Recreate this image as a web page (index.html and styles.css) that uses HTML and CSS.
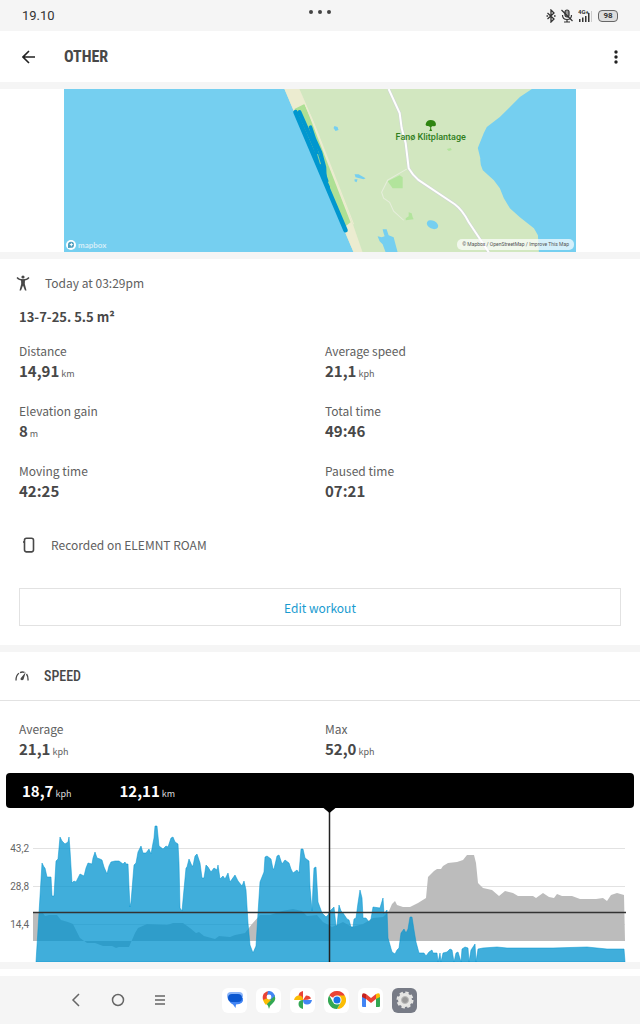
FILE: index.html
```html
<!DOCTYPE html>
<html lang="en">
<head>
    <meta charset="UTF-8">
    <meta name="viewport" content="width=device-width, initial-scale=1.0">
    <title>Workout</title>
    <link rel="stylesheet" href="styles.css">
</head>
<body>
    <!-- Status bar -->
    <div class="status-bar">
        <span class="clock">19.10</span>
        <svg class="dots" width="24" height="6" viewBox="0 0 24 6" fill="#444"><circle cx="3" cy="3" r="2"/><circle cx="12" cy="3" r="2"/><circle cx="21" cy="3" r="2"/></svg>
        <div class="status-icons">
            <svg width="10" height="14" viewBox="0 0 10 14" fill="none" stroke="#333" stroke-width="1.3"><path d="M1.500 4l6.500 6-3 3V1l3 3-6.500 6"/><path d="M0.500 7h1.600M8 7h1.600"/></svg>
            <svg width="12" height="14" viewBox="0 0 12 14" fill="none" stroke="#333" stroke-width="1.2"><rect x="4" y="1" width="4" height="7" rx="2" fill="#999"/><path d="M1.500 6c0 6 9 6 9 0M6 10.500V13M3 13h6M0.500 1l11 11"/></svg>
            <svg width="15" height="14" viewBox="0 0 15 14"><g fill="#333"><rect x="1" y="10" width="1.500" height="3"/><rect x="4" y="8.500" width="1.500" height="4.500"/><rect x="7" y="7" width="1.500" height="6"/><rect x="10" y="4" width="1.500" height="9"/></g><rect x="13" y="2" width="1" height="11" fill="#ccc"/><text class="network" x="0" y="5">4G+</text></svg>
            <span class="battery">98</span>
        </div>
    </div>

    <header class="app-header">
        <button class="icon-button" aria-label="Back">
            <svg width="14" height="14" viewBox="0 0 14 14" fill="none" stroke="#222" stroke-width="1.600"><path d="M13 7H1.500M7 1L1 7l6 6"/></svg>
        </button>
        <h1>OTHER</h1>
        <button class="icon-button" aria-label="More options">
            <svg width="4" height="14" viewBox="0 0 4 14" fill="#222"><circle cx="2" cy="2" r="1.700"/><circle cx="2" cy="7" r="1.700"/><circle cx="2" cy="12" r="1.700"/></svg>
        </button>
    </header>

    <!-- Route map -->
    <section class="map-section">
        <div class="map">
            <svg class="map-image" viewBox="0 0 511 163">
                <rect width="511" height="163" fill="#75cff0"/>
                <path fill="#d2e7c0" d="M220 0L289 163H474L473 146 469 139 455 128 445 119 439 109 435 99 429 91 418 81Q415 76 415.500 69L413 59 419 44 422 38 435 28 455 8 467 0Z"/>
                <path fill="#ececd0" d="M220 0H235L248 30 288 134 298 163H289Z"/>
                <path fill="#aee094" d="M230 20L240 15 246 30 286 133 281 137Z"/>
                <path fill="none" stroke="#ececd0" d="M240 14L250 36 289 135"/>
                <g fill="#b2e49c"><path d="M323 92L335 86 338 88V99H328Z"/><path d="M341 129l3-2v-4l3 1 1 4 1 2-8 1Z"/><path d="M382 60l4-1 1 2-3 1Z"/></g>
                <g fill="#75cff0"><path d="M270 37l3 1 1 3-3 1-2-3Z"/><path d="M290 85l4 0 7 4-2 1-8-2Z"/><path d="M290 90l3 0-1 3-2-1Z"/><ellipse cx="368" cy="135.500" rx="6" ry="4" transform="rotate(25 368 135)"/><path d="M313 147l4 1 3-1-1-3-1-4 4 0 2 6 5 2 4 15H321L318 155 315 152Z"/></g>
                <path fill="none" stroke="#e6eedb" d="M342 80L323 91 317 103 319 109 325 113 329 122 339 131"/>
                <path fill="none" stroke="#cfd3d6" stroke-width="3" d="M324 0L335 24 337 39 341 54 344 79Q348 86 354 91L390 115Q398 121 404 133L424 163"/>
                <path fill="none" stroke="#fff" stroke-width="2" d="M324 0L335 24 337 39 341 54 344 79Q348 86 354 91L390 115Q398 121 404 133L424 163"/>
                <g fill="none" stroke="#0097cf" stroke-linecap="round" stroke-linejoin="round">
                    <path stroke-width="4.500" d="M231 23L281 141"/>
                    <path stroke-width="4" d="M235 23L250 57 262 92"/>
                    <path stroke-width="3.500" d="M246 38L250 50 256 63 260 78 260.500 90"/>
                    <path stroke-width="3" d="M240 44L264 98"/>
                </g>
                <path fill="none" stroke="#8fd39a" d="M253 65L256 75"/>
                <path fill="#2f8512" d="M361 35q1-4 5-4 4 0 5 3 1 4-3 3l-1.500 1v2l1 2h-3l1-2v-2l-2-1q-3 0-2.500-2Z"/>
                <text class="place-name" x="366" y="51" text-anchor="middle">Fanø Klitplantage</text>
            </svg>
            <div class="mapbox-logo">
                <svg width="10" height="10" viewBox="0 0 10 10"><circle cx="5" cy="5" r="5" fill="#fff"/><path fill="#4d9dbd" d="M2 8V4.500A3 3 0 1 1 5 7.800Z"/><path fill="#fff" d="M5.300 2.500l.7 1.500 1.500.6L6 5.300l-.7 1.500-.6-1.500-1.500-.7 1.500-.6Z"/></svg>
                <span>mapbox</span>
            </div>
            <p class="attribution"><a href="#">© Mapbox</a> / <a href="#">OpenStreetMap</a> / <a href="#">Improve This Map</a></p>
        </div>
    </section>

    <!-- Workout summary -->
    <section class="summary">
        <div class="started">
            <svg width="14" height="16" viewBox="0 0 14 16" fill="none" stroke="#484848"><circle cx="7" cy="2" r="1.600" fill="#484848" stroke="none"/><path stroke-width="1.300" d="M1 2.500Q3 5 7 5T13 2.500"/><path fill="#484848" stroke="none" d="M5 4.500h4L8.800 9l1.700 6.500H9L7 10.500 5 15.500H3.500L5.200 9Z"/></svg>
            <span>Today at 03:29pm</span>
        </div>
        <h2 class="workout-name">13-7-25. 5.5 m²</h2>
        <dl class="stats">
            <div><dt>Distance</dt><dd>14,91<small>km</small></dd></div>
            <div><dt>Average speed</dt><dd>21,1<small>kph</small></dd></div>
            <div><dt>Elevation gain</dt><dd>8<small>m</small></dd></div>
            <div><dt>Total time</dt><dd>49:46</dd></div>
            <div><dt>Moving time</dt><dd>42:25</dd></div>
            <div><dt>Paused time</dt><dd>07:21</dd></div>
        </dl>
        <div class="device">
            <svg width="12" height="16" viewBox="0 0 12 16" fill="none" stroke="#484848"><rect x="1.500" y="1.300" width="9" height="13.400" rx="2" stroke-width="1.600"/><path d="M.7 4v2M3 15h6"/></svg>
            <span>Recorded on ELEMNT ROAM</span>
        </div>
        <button class="edit-button">Edit workout</button>
    </section>

    <!-- Speed -->
    <section class="speed">
        <div class="speed-header">
            <svg width="14" height="10" viewBox="0 0 14 10" fill="none" stroke="#484848" stroke-width="1.300"><path d="M1 9.500Q1 4 4 2.300M5 1.600Q7 .6 9.500 1.300M11.500 3Q13.300 5.500 13 9.500"/><path fill="#484848" stroke="none" d="M10.800 1L8.500 8.500Q7 10 5.500 8.500 5.300 7 6.500 6.300Z"/></svg>
            <h2>SPEED</h2>
        </div>
        <dl class="stats speed-stats">
            <div><dt>Average</dt><dd>21,1<small>kph</small></dd></div>
            <div><dt>Max</dt><dd>52,0<small>kph</small></dd></div>
        </dl>
        <div class="readout">
            <span>18,7<small>kph</small></span>
            <span>12,11<small>km</small></span>
        </div>
        <svg class="chart" viewBox="0 0 640 154">
            <path stroke="#e2e2e2" d="M33 40.500H625M33 78.500H625M33 116.500H625"/>
            <!-- elevation -->
            <path fill="#bcbcbc" d="M33 133V105H43L45 108 49 107H57L61 112 68 114 73 116 80 130 87 135H95L103 138H112L116 140 119 139H129L135 125 138 120 147 116 167 117 173 115H183L190 120 196 125 199 124 204 128 215 131 219 128 230 129 235 127 245 125 252 116 260 107H270L282 103 293 101 302 103 307 108 317 107 323 114 332 119 343 114 352 119 363 116 373 110 383 109 389 103 392 96 395 93 397 97 403 99H410L418 95 426 90 428 69 430 67 434 63 437 61H441L443 58 448 55 457 54 463 52 467 47H474L476 55 478 75 483 80 492 82 499 88 505 83 513 85 518 88H533L536 90 543 85 549 89 554 90 557 86 562 88H572L580 91H596L603 90 607 93 611 87 617 85 624 87 625 133Z"/>
            <!-- speed -->
            <path class="speed-area" d="M36 154L39 105 42 55 44 59 45 60 47 69H51L52 88H54L56 53 58 51 60 29 62 33 65 36 68 34 69 29 70 42 72 75 74 73 76 74 80 66 84 68 86 60 88 55 92 56 93 50 95 44 97 50 100 51 102 52 104 59 107 66 109 58 111 54 115 53H119L123 56 125 54 126 56H128L129 79 130 99 131 94 134 57 136 55 138 44 141 38 143 45H146L149 41 151 46 153 35 154 30 155 18H157L159 38 163 41 166 38 168 39 171 30 173 29 175 34 178 36 179 55 180 100 182 103 183 92 186 60 187 59 189 51 192 58H193L195 48 197 46 200 55 202 70H204L206 57 208 59 211 64 214 60 217 62 218 57 220 71 223 68 225 71 228 65 230 74 235 67 238 73 242 78 244 73 246 82 248 115 250 137 253 145 256 138 258 105 260 74 264 64 265 49 267 48 271 51 273 61H274L277 48 279 47 282 56 285 52 289 55 291 61 293 65 297 62 299 65 301 41H303L305 50 309 53 310 79 312 103 313 79 314 60 316 59 318 94 322 105 326 109 328 107 330 103 334 99 336 118H337L339 97 341 103 343 105 347 111 349 112 351 119H353L354 111 356 110 358 95 360 82 362 90 363 110H366L369 114 371 111 373 99 380 100 383 90 384 106 387 102 388 130 390 137 392 144 395 146 397 142 399 140 401 125 404 121 406 125 408 121 410 109H412L414 122 416 134 419 145H424L426 148 429 144 432 142 433 145H437L438 154 440 145 441 154 443 145 447 144 450 141 452 142 454 154 456 145 458 144 461 154 462 141 465 139 468 140 469 154 471 142 475 136 476 154 478 141 483 140 497 139 507 140H553L587 139 607 141H624L625 154Z"/>
            <path stroke="#333" stroke-width="1.500" d="M33 104.500H626"/>
            <path stroke="#222" stroke-width="1.500" d="M329.500 0V154"/>
            <path d="M323.500 0H335.500L329.500 5Z"/>
            <g class="axis" text-anchor="end"><text x="29" y="44">43,2</text><text x="29" y="82">28,8</text><text x="29" y="120">14,4</text></g>
        </svg>
    </section>
    <div class="next-section"></div>

    <!-- System navigation -->
    <nav class="system-nav">
        <button aria-label="Back"><svg width="16" height="16" viewBox="0 0 16 16" fill="none" stroke="#666" stroke-width="1.500"><path d="M11 2L5 8l6 6"/></svg></button>
        <button aria-label="Home"><svg width="16" height="16" viewBox="0 0 16 16" fill="none" stroke="#666" stroke-width="1.500"><circle cx="8" cy="8" r="5.500"/></svg></button>
        <button aria-label="Recent apps"><svg width="16" height="16" viewBox="0 0 16 16" fill="none" stroke="#666" stroke-width="1.500"><path d="M3 4h10M3 8h10M3 12h10"/></svg></button>
        <div class="apps">
            <button class="app" aria-label="Messages"><svg width="18" height="18" viewBox="0 0 18 18"><path fill="#8ab4f8" d="M5 1h8q4 0 4 4t-4 5H5Q1 9 1 5t4-4Z"/><path fill="#4285f4" d="M3 7h14q1 6-7 6.500L9.500 17 7 13.500Q3 12 3 7Z"/><rect x="2" y="3" width="14" height="8" rx="4" fill="#0b57d0"/></svg></button>
            <button class="app" aria-label="Maps"><svg width="18" height="18" viewBox="0 0 18 18"><path fill="#34a853" d="M15 6q1 3-2 6-3 2-4 6-1-4-3-6L14.500 4Z"/><path fill="#fbbc04" d="M3 9L7 5l4 4-5 5Q4 12 3 9Z"/><path fill="#ea4335" d="M4 2.500Q6 0 9 0L7.500 7 3 9Q2 5 4 2.500Z"/><path fill="#4285f4" d="M8 0q5-.5 7 5L10 9 7 5Z"/><circle cx="9" cy="6" r="2.400" fill="#fff"/></svg></button>
            <button class="app" aria-label="Photos"><svg width="18" height="18" viewBox="0 0 18 18"><path fill="#ea4335" d="M9 0Q4.500 1 4.500 5T9 9Z"/><path fill="#4285f4" d="M9 9H18Q17 13.500 13 13.500T9 9Z"/><path fill="#34a853" d="M9 18Q4.500 17 4.500 13T9 9Z"/><path fill="#fbbc04" d="M0 9Q1 4.500 5 4.500T9 9Z"/><path fill="#ea4335" d="M9 9L12 4.500Q16 4.500 17 7.500Q14 9 9 9Z"/></svg></button>
            <button class="app" aria-label="Chrome"><svg width="18" height="18" viewBox="0 0 18 18"><path fill="#ea4335" d="M9 9L1.200 4.500A9 9 0 0 1 16.800 4.500Z"/><path fill="#fbbc04" d="M9 4.500H16.800A9 9 0 0 1 9 18L13 11Z"/><path fill="#34a853" d="M1.200 4.500A9 9 0 0 0 9 18L13 11 9 9 5 11Z"/><circle cx="9" cy="9" r="4.500" fill="#fff"/><circle cx="9" cy="9" r="3.500" fill="#1a73e8"/></svg></button>
            <button class="app" aria-label="Gmail"><svg width="18" height="14" viewBox="0 0 18 14"><path fill="#4285f4" d="M0 2l4 3v9H1q-1 0-1-1Z"/><path fill="#34a853" d="M18 2l-4 3v9h3q1 0 1-1Z"/><path fill="#ea4335" d="M4 1l5 4 5-4v5L9 10 4 6Z"/><path fill="#c5221f" d="M0 2.500Q0-1 4 1V6L0 4Z"/><path fill="#fbbc04" d="M18 2.500Q18-1 14 1V6l4-2Z"/></svg></button>
            <button class="app settings" aria-label="Settings"><svg width="18" height="18" viewBox="0 0 18 18"><circle cx="9" cy="9" r="7" fill="#e6e6e4"/><circle cx="9" cy="9" r="7.500" fill="none" stroke="#e6e6e4" stroke-width="2" stroke-dasharray="3.500 2.400"/><circle cx="9" cy="9" r="3.500" fill="#999" stroke="#bbb"/></svg></button>
        </div>
    </nav>
</body>
</html>
```
FILE: styles.css
```css
* {
    box-sizing: border-box;
}
body {
    margin: 0;
    background-color: #fff;
    color: #606060;
    font-family: "Noto Sans CJK SC", "Noto Sans", sans-serif;
    font-size: 12px;
    line-height: 20px;
}
h1, h2, p, dl, dd {
    margin: 0;
}
button {
    padding: 0;
    border: none;
    background: none;
    font-family: inherit;
    cursor: pointer;
}
svg {
    display: block;
}

/* Status bar */
.status-bar {
    display: grid;
    grid-template-columns: 1fr auto 1fr;
    height: 31px;
    padding: 0 22px;
    background-color: #f5f5f5;
    align-items: center;
}
.clock {
    color: #333;
    font-family: Roboto, sans-serif;
    font-size: 13px;
}
.dots {
    align-self: start;
    margin-top: 9px;
}
.status-icons {
    display: flex;
    justify-content: flex-end;
    align-items: center;
    gap: 5px;
}
.network {
    font-family: Roboto, sans-serif;
    font-size: 6px;
    font-weight: bold;
    fill: #333;
}
.battery {
    width: 20px;
    border: 1px solid #666;
    border-radius: 4px;
    background-color: #ddd;
    color: #333;
    font-family: Roboto, sans-serif;
    font-size: 8px;
    font-weight: bold;
    line-height: 10px;
    text-align: center;
}

/* Header */
.app-header {
    display: flex;
    align-items: center;
    height: 51px;
    padding: 0 22px;
}
.app-header h1 {
    flex: 1;
    padding-left: 28px;
}
h1, .speed-header h2 {
    color: #484848;
    font-family: "Liberation Sans Narrow", "Roboto Condensed", "Noto Sans CJK SC", sans-serif;
    font-size: 16px;
}

/* Map */
.map-section {
    padding: 0 64px;
    border-top: 7px solid #f5f5f5;
    border-bottom: 7px solid #f5f5f5;
}
.map {
    position: relative;
}
.map-image {
    width: 100%;
}
.place-name {
    font-family: Roboto, sans-serif;
    font-size: 9px;
    font-weight: 500;
    fill: #2f7d1c;
}
.mapbox-logo {
    position: absolute;
    left: 2px;
    bottom: 2px;
    display: flex;
    align-items: center;
    gap: 2px;
    color: #d6eef8;
    font-family: Lato, sans-serif;
    font-size: 8px;
    font-weight: bold;
    line-height: 10px;
}
.attribution {
    position: absolute;
    right: 2px;
    bottom: 2px;
    padding: 0 5px;
    border-radius: 5px;
    background-color: #ffffffb0;
    color: #555;
    font-family: Roboto, sans-serif;
    font-size: 5px;
    line-height: 11px;
}
.attribution a {
    color: inherit;
    text-decoration: none;
}

/* Summary */
.summary {
    padding: 14px 19px 19px;
    border-bottom: 7px solid #f5f5f5;
}
.started {
    display: flex;
    align-items: center;
    gap: 15px;
    margin-left: -3px;
}
.workout-name {
    margin: 14px 0;
    color: #484848;
    font-size: 13px;
}
.stats {
    display: grid;
    grid-template-columns: 1fr 1fr;
    column-gap: 10px;
    row-gap: 20px;
}
.stats dd {
    color: #484848;
    font-size: 15px;
    font-weight: bold;
}
small {
    margin-left: 2px;
    color: #606060;
    font-size: 9px;
    font-weight: normal;
    line-height: 9px;
}
.device {
    display: flex;
    align-items: center;
    gap: 16px;
    padding: 34px 4px 33px;
}
.edit-button {
    width: 100%;
    height: 38px;
    border: 1px solid #e2e2e2;
    color: #189bd0;
    font-size: 12px;
}

/* Speed */
.speed-header {
    display: flex;
    align-items: center;
    gap: 15px;
    height: 49px;
    padding: 0 15px;
    border-bottom: 1px solid #e2e2e2;
}
.speed-header h2 {
    font-size: 14px;
    font-weight: 500;
}
.speed-stats {
    padding: 18px 19px 14px;
}
.readout {
    display: flex;
    gap: 48px;
    margin: 0 6px;
    padding: 0 16px;
    border-radius: 4px;
    background-color: #000;
    color: #fff;
    font-size: 15px;
    font-weight: bold;
    line-height: 35px;
}
.readout small {
    color: #ddd;
}
.chart {
    width: 100%;
}
.speed-area {
    fill: #0093cf;
    fill-opacity: 0.75;
    stroke: #0093cf;
    stroke-opacity: 0.5;
}
.axis {
    font-family: Roboto, sans-serif;
    font-size: 10px;
    fill: #666;
}
.next-section {
    height: 14px;
    border-top: 7px solid #f5f5f5;
}

/* System navigation */
.system-nav {
    display: flex;
    align-items: center;
    gap: 26px;
    height: 48px;
    padding-left: 68px;
    background-color: #f5f5f5;
}
.apps {
    display: flex;
    gap: 9px;
    padding-left: 28px;
}
.app {
    display: flex;
    justify-content: center;
    align-items: center;
    width: 25px;
    height: 25px;
    border-radius: 6px;
    background-color: #fff;
}
.settings {
    background-color: #777b86;
}
```
